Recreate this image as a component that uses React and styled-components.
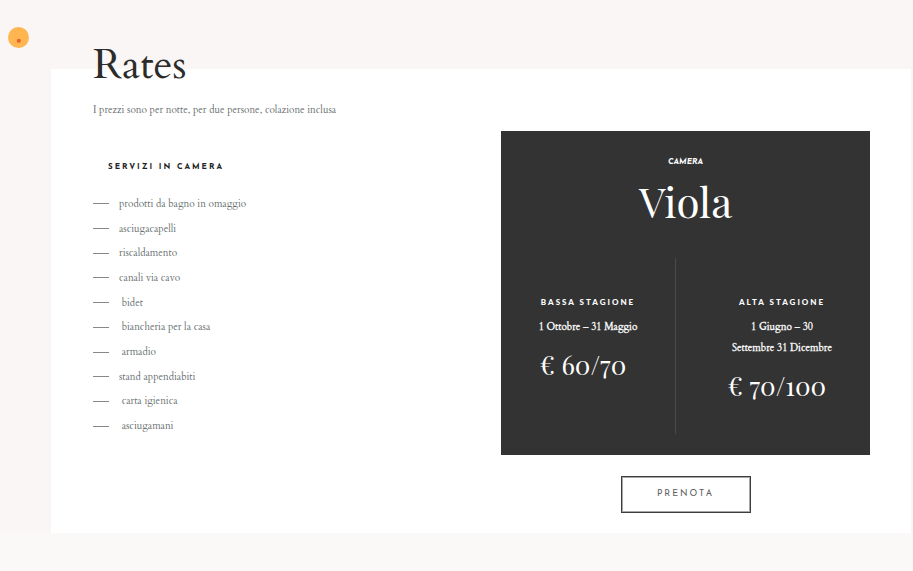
import React from "react";
import styled, { createGlobalStyle } from "styled-components";

const GlobalStyle = createGlobalStyle`
  * { box-sizing: border-box; }
  body { margin: 0; background: #faf9f7; }
  h1, h2, h3, p, ul { margin: 0; padding: 0; }
`;

const serif = `Cardo, "Liberation Serif", serif`;
const display = `"Playfair Display", "Liberation Serif", serif`;
const sans = `"Josefin Sans", Lato, sans-serif`;
const heavySans = `Lato, sans-serif`;

const Section = styled.section`
  display: grid;
  grid-template-columns: 51px minmax(0, 1fr);
  padding-right: 2px;
  background: #faf6f5;
  font-family: ${serif};
`;

const Marker = styled.svg`
  display: block;
  width: 21px;
  height: 21px;
  margin: 27px 0 0 8px;
`;

const Panel = styled.main`
  display: grid;
  grid-template-columns: minmax(0, 1fr) minmax(0, 369px);
  align-items: start;
  margin-top: 69px;
  padding: 0 41px 20px 42px;
  background: #fff;
`;

const Intro = styled.div`
  margin-top: -30px;
`;

const Title = styled.h1`
  font-size: 42px;
  line-height: 52px;
  font-weight: 400;
  color: #2c2c2c;
`;

const Note = styled.p`
  margin-top: 10px;
  font-size: 10px;
  line-height: 18px;
  color: #687070;
`;

const ListTitle = styled.h2`
  margin: 38px 0 15px 15px;
  font: 700 8px/20px ${sans};
  letter-spacing: 2px;
  text-transform: uppercase;
  color: #222;
`;

const Services = styled.ul`
  display: grid;
  grid-auto-rows: 1fr;
  min-height: 247px;
  list-style: none;
`;

const Service = styled.li`
  display: flex;
  align-items: center;
  gap: 10px;
  padding-bottom: 1px;
  font-size: 10px;
  line-height: 22px;
  white-space: pre;
  color: #687070;

  &::before {
    content: "";
    width: 16px;
    height: 1px;
    background: #858989;
  }
`;

const Booking = styled.div`
  display: flex;
  flex-direction: column;
  align-items: center;
  gap: 21px;
  margin-top: 62px;
`;

const Card = styled.article`
  width: 100%;
  padding: 20px 0 21px;
  background: #333;
  color: #fff;
  text-align: center;
`;

const Kind = styled.p`
  font: italic 900 8px/22px ${sans};
  text-transform: uppercase;
`;

const RoomName = styled.h2`
  font: 400 42px/56px ${display};
`;

const Seasons = styled.div`
  display: grid;
  grid-template-columns: 175px minmax(0, 1fr);
  min-height: 176px;
  margin-top: 29px;
`;

const Season = styled.section`
  padding: 34px 0 0 ${(p) => (p.$divided ? 0 : 18)}px;
  border-right: ${(p) => (p.$divided ? "1px solid #4a4a4a" : "0")};
`;

const SeasonName = styled.h3`
  font: 900 8px/20px ${heavySans};
  letter-spacing: 2px;
  text-transform: uppercase;
`;

const Dates = styled.p`
  margin-top: 5px;
  font-size: 10px;
  line-height: 21px;
  -webkit-text-stroke: 0.3px #fff;
`;

const Price = styled.p`
  margin-top: 8px;
  padding-right: 10px;
  font: 400 26px/38px ${display};
`;

const BookButton = styled.button`
  width: 130px;
  height: 37px;
  padding: 0 0 2px;
  border: 1px solid #3c3e40;
  outline: 1px solid #a5a6a7;
  outline-offset: -2px;
  background: #fff;
  color: #606060;
  font: 400 9px/16px ${sans};
  letter-spacing: 2px;
  text-transform: uppercase;
  cursor: pointer;
`;

const services = [
  "prodotti da bagno in omaggio",
  "asciugacapelli",
  "riscaldamento",
  "canali via cavo",
  " bidet",
  " biancheria per la casa",
  " armadio",
  "stand appendiabiti",
  " carta igienica",
  " asciugamani",
];

export default function App() {
  return (
    <>
      <GlobalStyle />
      <Section>
        <Marker viewBox="0 0 21 21" aria-hidden="true">
          <circle cx="10.5" cy="10.5" r="10.5" fill="#ffb650" />
          <circle cx="10.8" cy="13.8" r="2.1" fill="#e8622c" />
        </Marker>
        <Panel>
          <Intro>
            <Title>Rates</Title>
            <Note>I prezzi sono per notte, per due persone, colazione inclusa</Note>
            <ListTitle>Servizi in camera</ListTitle>
            <Services>
              {services.map((name) => (
                <Service key={name}>{name}</Service>
              ))}
            </Services>
          </Intro>
          <Booking>
            <Card>
              <Kind>Camera</Kind>
              <RoomName>Viola</RoomName>
              <Seasons>
                <Season $divided>
                  <SeasonName>Bassa stagione</SeasonName>
                  <Dates>1 Ottobre – 31 Maggio</Dates>
                  <Price>€ 60/70</Price>
                </Season>
                <Season>
                  <SeasonName>Alta stagione</SeasonName>
                  <Dates>
                    1 Giugno – 30
                    <br />
                    Settembre 31 Dicembre
                  </Dates>
                  <Price>€ 70/100</Price>
                </Season>
              </Seasons>
            </Card>
            <BookButton type="button">Prenota</BookButton>
          </Booking>
        </Panel>
      </Section>
    </>
  );
}
